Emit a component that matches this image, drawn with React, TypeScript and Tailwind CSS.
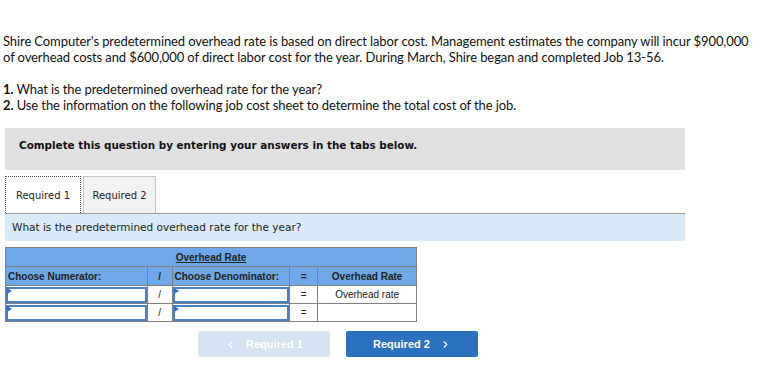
import { ChevronLeft, ChevronRight } from "lucide-react";

function AnswerInput() {
  return (
    <div className="relative h-[16px] border-2 border-[#4a7fc1] bg-white">
      <span className="absolute left-[-1px] top-[-1px] h-0 w-0 border-l-[5px] border-t-[3px] border-b-[3px] border-l-[#2f6fd0] border-t-transparent border-b-transparent" />
    </div>
  );
}

export default function App() {
  const rows = [{ label: "Overhead rate" }, { label: "" }];

  return (
    <div className="w-[773px] h-[379px] bg-white text-[#111] relative">
      <div className="pt-[33px] pl-[3px] pr-[10px] font-['Lato',sans-serif] text-[13px] leading-[16px] tracking-[-0.1px]">
        <p>
          Shire Computer's predetermined overhead rate is based on direct labor cost. Management estimates the company will incur $900,000 of overhead costs and $600,000 of direct labor cost for the year. During March, Shire began and completed Job 13-56.
        </p>
        <p className="mt-[16px]">
          <b>1.</b> What is the predetermined overhead rate for the year?
        </p>
        <p>
          <b>2.</b> Use the information on the following job cost sheet to determine the total cost of the job.
        </p>
      </div>

      <div className="ml-[5px] w-[680px] mt-[15px]">
        <div className="h-[42px] bg-[#e0e0e0] pt-[10px] pl-[14px] font-['DejaVu_Sans',Verdana,sans-serif] text-[10.4px] font-bold">
          Complete this question by entering your answers in the tabs below.
        </div>

        <div className="mt-[6px] flex items-end gap-[2px] font-['DejaVu_Sans',Verdana,sans-serif] text-[10px] text-[#222]">
          <div className="w-[76px] h-[37px] bg-white border border-dotted border-[#555] border-b-0 flex items-center justify-center">
            Required 1
          </div>
          <div className="w-[73px] h-[37px] bg-[#f2f2f2] border border-[#c4c4c4] border-b-0 flex items-center justify-center">
            Required 2
          </div>
        </div>
        <div className="h-[28px] border-t border-[#9a9a9a] bg-[#d9ebf9] flex items-center pl-[7px] font-['DejaVu_Sans',Verdana,sans-serif] text-[10.5px] text-[#222]">
          What is the predetermined overhead rate for the year?
        </div>

        <table className="mt-[6px] w-[412px] border-collapse font-['Liberation_Sans',Arial,sans-serif] text-[10px] text-[#222]">
          <colgroup>
            <col className="w-[142px]" />
            <col className="w-[25px]" />
            <col className="w-[118px]" />
            <col className="w-[28px]" />
            <col className="w-[99px]" />
          </colgroup>
          <tbody>
            <tr className="h-[19px] bg-[#6fa8e8]">
              <td colSpan={5} className="border border-[#7f7f7f] text-center font-bold underline">
                Overhead Rate
              </td>
            </tr>
            <tr className="h-[19px] bg-[#6fa8e8] font-bold">
              <td className="border border-[#7f7f7f] pl-[2px]">Choose Numerator:</td>
              <td className="border border-[#7f7f7f] text-center">/</td>
              <td className="border border-[#7f7f7f] pl-[2px]">Choose Denominator:</td>
              <td className="border border-[#7f7f7f] text-center">=</td>
              <td className="border border-[#7f7f7f] text-center">Overhead Rate</td>
            </tr>
            {rows.map((r, i) => (
              <tr key={i} className="h-[18px] bg-white">
                <td className="border border-[#7f7f7f] p-0">
                  <AnswerInput />
                </td>
                <td className="border border-[#7f7f7f] text-center">/</td>
                <td className="border border-[#7f7f7f] p-0">
                  <AnswerInput />
                </td>
                <td className="border border-[#7f7f7f] text-center">=</td>
                <td className="border border-[#7f7f7f] text-center">{r.label}</td>
              </tr>
            ))}
          </tbody>
        </table>

        <div className="mt-[9px] ml-[193px] flex gap-[16px] font-['Liberation_Sans',Arial,sans-serif] text-[11px] font-bold text-white">
          <div className="w-[132px] h-[26px] rounded-[2px] bg-[#d5e3f3] flex items-center justify-center gap-[10px]">
            <ChevronLeft size={11} strokeWidth={2.5} />
            <span>Required 1</span>
          </div>
          <div className="w-[132px] h-[26px] rounded-[2px] bg-[#2c70c0] flex items-center justify-center gap-[10px]">
            <span>Required 2</span>
            <ChevronRight size={11} strokeWidth={2.5} />
          </div>
        </div>
      </div>
    </div>
  );
}
